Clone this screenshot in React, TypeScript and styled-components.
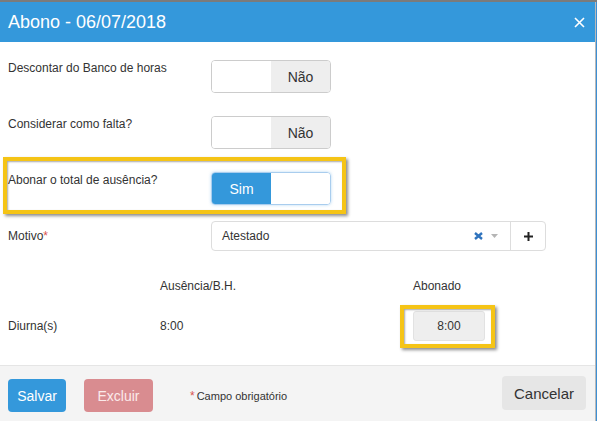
import React from "react";
import styled, { createGlobalStyle, css } from "styled-components";

const GlobalStyle = createGlobalStyle`
  html, body { margin: 0; padding: 0; }
  body {
    background: #3d8fd4;
    font-family: "Liberation Sans", Arial, Helvetica, sans-serif;
    color: #333;
  }
  * { box-sizing: border-box; }
`;

const Page = styled.div`
  height: 421px;
  border-top: 2px solid #7b7b7b;
  overflow: hidden;
`;

const Modal = styled.div`
  width: 596px;
  height: 419px;
  background: #fff;
  border-right: 1px solid #b9b9b9;
  display: flex;
  flex-direction: column;
`;

const Header = styled.div`
  height: 40px;
  background: #3498db;
  display: flex;
  align-items: center;
  justify-content: space-between;
  padding: 0 10px 0 8px;
`;

const Title = styled.h4`
  margin: 0;
  font-size: 18px;
  font-weight: 400;
  color: #fff;
  line-height: 20px;
  margin-top: -1px;
`;

const CloseBtn = styled.button`
  border: 0;
  background: transparent;
  padding: 0;
  width: 11px;
  height: 11px;
  display: flex;
  cursor: pointer;
  margin-top: 1px;
`;

const Body = styled.div`
  flex: 1;
  padding: 18px 0 0 8px;
  display: flex;
  flex-direction: column;
`;

const FormRow = styled.div<{ $mb: number; $center?: boolean }>`
  position: relative;
  display: flex;
  align-items: ${(p) => (p.$center ? "center" : "flex-start")};
  margin-bottom: ${(p) => p.$mb}px;
`;

const Label = styled.div`
  width: 203px;
  font-size: 12px;
  line-height: 17px;
  color: #333;
`;

const Req = styled.span`
  color: #d9534f;
`;

const Highlight = styled.div<{ $l: number; $t: number; $w: number; $h: number }>`
  position: absolute;
  left: ${(p) => p.$l}px;
  top: ${(p) => p.$t}px;
  width: ${(p) => p.$w}px;
  height: ${(p) => p.$h}px;
  border: 4px solid #f5c416;
  box-shadow: 2px 2px 3px rgba(0, 0, 0, 0.45), inset 1px 1px 2px rgba(0, 0, 0, 0.35);
  pointer-events: none;
`;

const Toggle = styled.div<{ $focus?: boolean }>`
  width: 120px;
  height: 33px;
  display: flex;
  border: 1px solid #ccc;
  border-radius: 4px;
  overflow: hidden;
  ${(p) =>
    p.$focus &&
    css`
      border-color: #a9cdee;
      box-shadow: 0 0 3px rgba(102, 175, 233, 0.5);
    `}
`;

const ToggleHalf = styled.div<{ $variant: "blank" | "off" | "on" }>`
  flex: 1;
  display: flex;
  align-items: center;
  justify-content: center;
  font-size: 14px;
  ${(p) =>
    p.$variant === "off"
      ? css`
          background: #eee;
          color: #333;
        `
      : p.$variant === "on"
      ? css`
          background: #3498db;
          color: #fff;
        `
      : css`
          background: #fff;
        `}
`;

const Select = styled.div`
  width: 335px;
  height: 30px;
  display: flex;
  border: 1px solid #ddd;
  border-radius: 4px;
`;

const SelectValue = styled.div`
  flex: 1;
  display: flex;
  align-items: center;
  padding: 0 0 0 10px;
  font-size: 12px;
  color: #333;
`;

const SelectIcons = styled.div`
  display: flex;
  align-items: center;
  gap: 8px;
  padding-right: 12px;
`;

const AddOn = styled.div`
  width: 35px;
  border-left: 1px solid #ddd;
  display: flex;
  align-items: center;
  justify-content: center;
`;

const TableRow = styled.div<{ $mb: number }>`
  position: relative;
  display: grid;
  grid-template-columns: 152px 253px auto;
  align-items: center;
  font-size: 12px;
  color: #333;
  margin-bottom: ${(p) => p.$mb}px;
`;

const Cell = styled.div`
  line-height: 14px;
`;

const TimeBox = styled.div`
  width: 72px;
  height: 30px;
  background: #eee;
  border: 1px solid #e2e2e2;
  border-radius: 3px;
  display: flex;
  align-items: center;
  justify-content: center;
  font-size: 12px;
  color: #333;
`;

const Footer = styled.div`
  height: 56px;
  border-top: 1px solid #e5e5e5;
  background: #f4f4f4;
  display: flex;
  align-items: flex-start;
  padding: 0 9px 0 8px;
`;

const Btn = styled.button<{ $kind: "primary" | "danger" | "default"; $w: number; $h: number; $mt: number; $ml?: number }>`
  width: ${(p) => p.$w}px;
  height: ${(p) => p.$h}px;
  margin-top: ${(p) => p.$mt}px;
  margin-left: ${(p) => p.$ml ?? 0}px;
  border: 0;
  border-radius: 4px;
  font-family: inherit;
  font-size: 14px;
  padding: 0;
  cursor: pointer;
  ${(p) =>
    p.$kind === "primary"
      ? css`
          background: #3498db;
          color: #fff;
        `
      : p.$kind === "danger"
      ? css`
          background: #d98c90;
          color: #fbeaea;
        `
      : css`
          background: #e6e6e6;
          color: #333;
          font-size: 15px;
        `}
`;

const Note = styled.div`
  margin: 23px 0 0 37px;
  font-size: 11px;
  color: #333;
  flex: 1;
`;

const NoteStar = styled.span`
  color: #d9534f;
  font-size: 12px;
  margin-right: 2px;
`;

export default function App() {
  return (
    <>
      <GlobalStyle />
      <Page>
        <Modal>
          <Header>
            <Title>Abono - 06/07/2018</Title>
            <CloseBtn aria-label="Fechar">
              <svg width="11" height="11" viewBox="0 0 11 11">
                <path d="M1 1 L10 10 M10 1 L1 10" stroke="#fff" strokeWidth="1.6" />
              </svg>
            </CloseBtn>
          </Header>
          <Body>
            <FormRow $mb={23}>
              <Label>Descontar do Banco de horas</Label>
              <Toggle>
                <ToggleHalf $variant="blank" />
                <ToggleHalf $variant="off">Não</ToggleHalf>
              </Toggle>
            </FormRow>
            <FormRow $mb={23}>
              <Label>Considerar como falta?</Label>
              <Toggle>
                <ToggleHalf $variant="blank" />
                <ToggleHalf $variant="off">Não</ToggleHalf>
              </Toggle>
            </FormRow>
            <FormRow $mb={16}>
              <Label>Abonar o total de ausência?</Label>
              <Toggle $focus>
                <ToggleHalf $variant="on">Sim</ToggleHalf>
                <ToggleHalf $variant="blank" />
              </Toggle>
              <Highlight $l={-5} $t={-15} $w={343} $h={57} />
            </FormRow>
            <FormRow $mb={28} $center>
              <Label>
                Motivo<Req>*</Req>
              </Label>
              <Select>
                <SelectValue>Atestado</SelectValue>
                <SelectIcons>
                  <svg width="9" height="8" viewBox="0 0 9 8">
                    <path d="M1 1 L8 7 M8 1 L1 7" stroke="#2f73bd" strokeWidth="2.4" />
                  </svg>
                  <svg width="7" height="4" viewBox="0 0 7 4">
                    <path d="M0 0 L7 0 L3.5 4 Z" fill="#b5b5b5" />
                  </svg>
                </SelectIcons>
                <AddOn>
                  <svg width="9" height="9" viewBox="0 0 9 9">
                    <path d="M4.5 0 V9 M0 4.5 H9" stroke="#222" strokeWidth="2" />
                  </svg>
                </AddOn>
              </Select>
            </FormRow>
            <TableRow $mb={18}>
              <Cell />
              <Cell>Ausência/B.H.</Cell>
              <Cell>Abonado</Cell>
            </TableRow>
            <TableRow $mb={0}>
              <Cell>Diurna(s)</Cell>
              <Cell>8:00</Cell>
              <TimeBox>8:00</TimeBox>
              <Highlight $l={392} $t={-6} $w={95} $h={43} />
            </TableRow>
          </Body>
          <Footer>
            <Btn $kind="primary" $w={58} $h={33} $mt={13}>
              Salvar
            </Btn>
            <Btn $kind="danger" $w={69} $h={33} $mt={13} $ml={18}>
              Excluir
            </Btn>
            <Note>
              <NoteStar>*</NoteStar>Campo obrigatório
            </Note>
            <Btn $kind="default" $w={84} $h={34} $mt={10}>
              Cancelar
            </Btn>
          </Footer>
        </Modal>
      </Page>
    </>
  );
}
